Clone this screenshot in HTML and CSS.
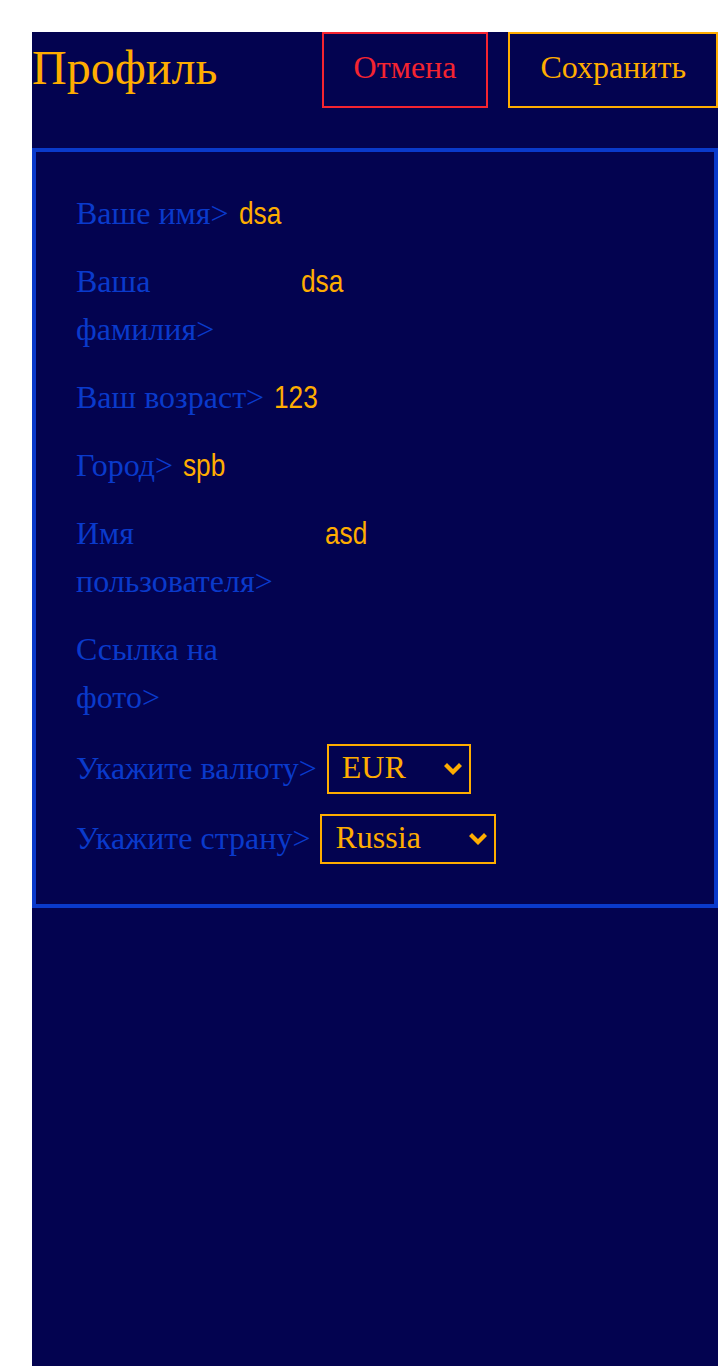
FILE: index.html
```html
<!DOCTYPE html>
<html lang="ru">
<head>
<meta charset="utf-8">
<title>Профиль</title>
<link rel="stylesheet" href="styles.css">
</head>
<body>
<div class="page">
  <header class="header">
    <h1 class="title">Профиль</h1>
    <div class="actions">
      <button class="btn btn-cancel" type="button">Отмена</button>
      <button class="btn btn-save" type="button">Сохранить</button>
    </div>
  </header>
  <form class="card">
    <div class="row">
      <label class="label">Ваше имя&gt;</label>
      <input class="value" type="text" value="dsa">
    </div>
    <div class="row">
      <label class="label">Ваша фамилия&gt;</label>
      <input class="value" type="text" value="dsa">
    </div>
    <div class="row">
      <label class="label">Ваш возраст&gt;</label>
      <input class="value" type="text" value="123">
    </div>
    <div class="row">
      <label class="label">Город&gt;</label>
      <input class="value" type="text" value="spb">
    </div>
    <div class="row">
      <label class="label">Имя пользователя&gt;</label>
      <input class="value" type="text" value="asd">
    </div>
    <div class="row">
      <label class="label">Ссылка на фото&gt;</label>
      <input class="value" type="text" value="">
    </div>
    <div class="row row-select row-select-first">
      <label class="label">Укажите валюту&gt;</label>
      <span class="select-wrap">
        <select class="select select-currency">
          <option>EUR</option>
          <option>USD</option>
          <option>RUB</option>
        </select>
        <svg class="chevron" width="18" height="12" viewBox="0 0 18 12" aria-hidden="true"><polygon points="0,3 3,0 9,6 15,0 18,3 9,12"/></svg>
      </span>
    </div>
    <div class="row row-select">
      <label class="label">Укажите страну&gt;</label>
      <span class="select-wrap">
        <select class="select select-country">
          <option>Russia</option>
          <option>Belarus</option>
        </select>
        <svg class="chevron" width="18" height="12" viewBox="0 0 18 12" aria-hidden="true"><polygon points="0,3 3,0 9,6 15,0 18,3 9,12"/></svg>
      </span>
    </div>
  </form>
</div>
</body>
</html>
```
FILE: styles.css
```css
html, body {
  margin: 0;
  padding: 0;
  background: #ffffff;
}

body {
  font-family: "Liberation Serif", "Times New Roman", serif;
  padding: 32px 0 0 32px;
}

.page {
  background: #030350;
  min-height: calc(100vh - 32px);
}

.header {
  display: flex;
  justify-content: space-between;
  align-items: flex-start;
}

.title {
  margin: 0;
  font-size: 48px;
  line-height: 72px;
  font-weight: normal;
  color: #ffad00;
}

.actions {
  display: flex;
  gap: 20px;
}

.btn {
  font-family: "Liberation Serif", "Times New Roman", serif;
  font-size: 32px;
  line-height: 37px;
  padding: 15px 30px 20px;
  background: transparent;
  border: 2px solid;
  margin: 0;
  cursor: pointer;
}

.btn-cancel {
  color: #f52430;
  border-color: #f52430;
}

.btn-save {
  color: #ffad00;
  border-color: #ffad00;
}

.card {
  margin: 40px 0 0;
  border: 4px solid #0a3acb;
  padding: 37px 40px 40px;
  display: flex;
  flex-direction: column;
  gap: 20px;
}

.row {
  display: flex;
  align-items: baseline;
  gap: 10px;
}

.row-select {
  align-items: flex-start;
}

.row-select-first {
  margin-top: 3px;
}

.label {
  font-size: 32px;
  line-height: 48px;
  color: #0a3acb;
  flex-shrink: 1;
}

.value {
  font-family: "Liberation Sans Narrow", "Liberation Sans", Arial, sans-serif;
  font-size: 32px;
  color: #ffad00;
  background: transparent;
  border: 0;
  padding: 0;
  margin: 0;
  width: 383px;
  min-width: 0;
  flex-shrink: 1;
  outline: none;
  transform: scaleX(0.82);
  transform-origin: left center;
}

.select-wrap {
  position: relative;
  display: inline-block;
  flex-shrink: 0;
}

.select {
  display: block;
  -webkit-appearance: none;
  appearance: none;
  font-family: "Liberation Serif", "Times New Roman", serif;
  font-size: 32px;
  color: #ffad00;
  background: transparent;
  border: 2px solid #ffad00;
  border-radius: 0;
  height: 50px;
  padding: 0 0 4px 13px;
  margin: 0;
  box-sizing: border-box;
  outline: none;
}

.select option {
  background: #030350;
  color: #ffad00;
}

.select-currency {
  width: 144px;
}

.select-country {
  width: 176px;
}

.chevron {
  position: absolute;
  right: 9px;
  top: 19px;
  fill: #ffad00;
  pointer-events: none;
}
```
